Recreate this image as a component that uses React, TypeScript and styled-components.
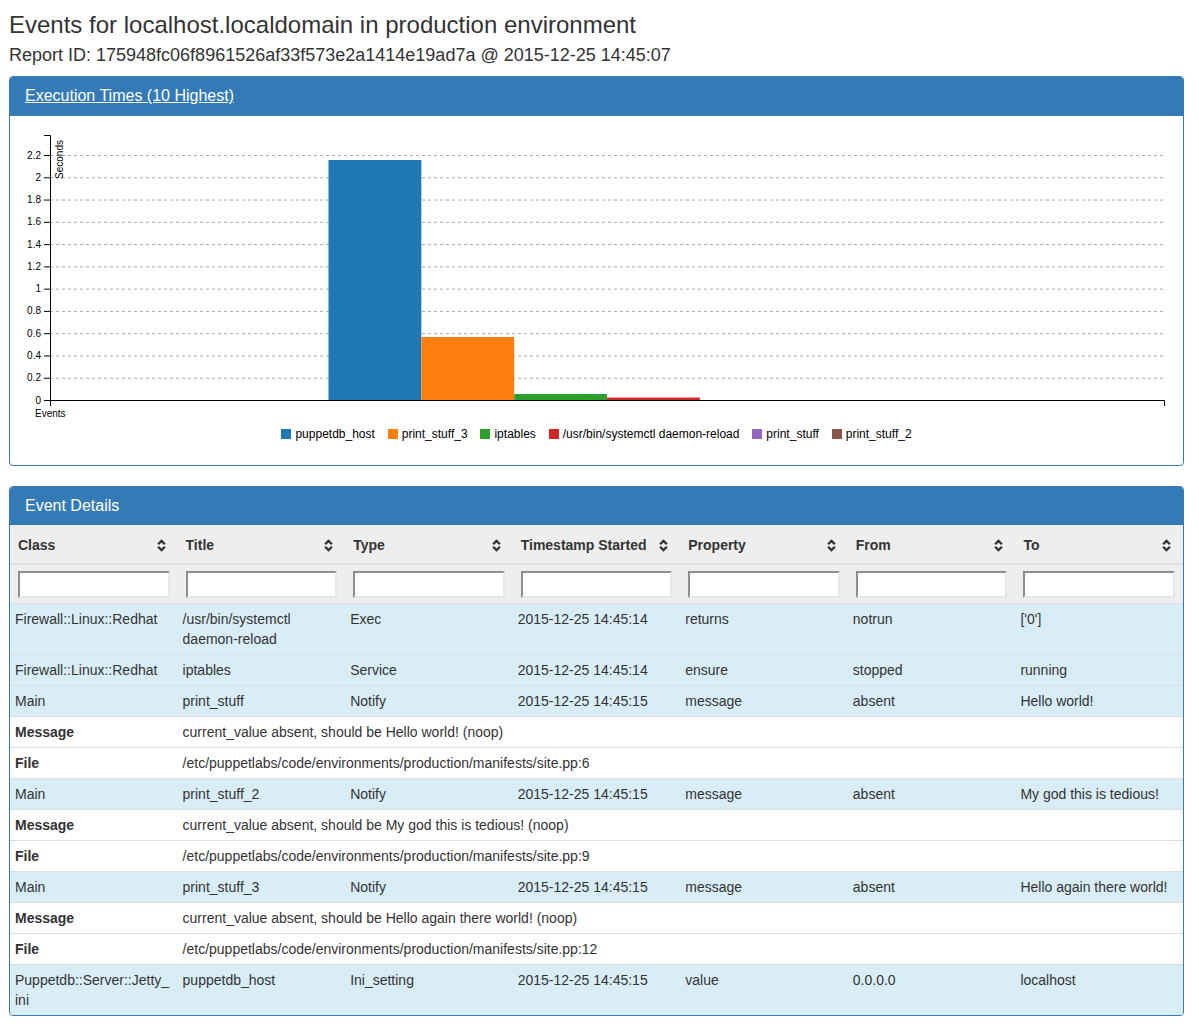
import React from 'react';
import styled, { createGlobalStyle } from 'styled-components';

const GlobalStyle = createGlobalStyle`
  html, body { margin: 0; padding: 0; background: #fff; }
  body {
    font-family: "Liberation Sans", Arial, Helvetica, sans-serif;
    font-size: 14px;
    line-height: 1.42857143;
    color: #333;
  }
  * { box-sizing: border-box; }
`;

const Page = styled.div`
  padding: 0 15px 1px 9px;
`;

const Title = styled.h3`
  font-size: 24px;
  font-weight: 400;
  line-height: 1.1;
  margin: 12px 0 0;
  color: #333;
`;

const Subtitle = styled.h4`
  font-size: 18px;
  font-weight: 400;
  line-height: 1.1;
  margin: 8px 0 10px;
  color: #333;
`;

const Panel = styled.section`
  border: 1px solid #337ab7;
  border-radius: 4px;
  background: #fff;
  margin-bottom: 20px;
  overflow: hidden;
`;

const PanelHeading = styled.div`
  background: #337ab7;
  color: #fff;
  padding: 10px 15px;
  border-bottom: 1px solid #337ab7;
`;

const PanelTitle = styled.h3<{ $link?: boolean }>`
  margin: 0;
  font-size: 16px;
  font-weight: 400;
  line-height: 1.1;
  color: #fff;
  text-decoration: ${(p) => (p.$link ? 'underline' : 'none')};
`;

const ChartBody = styled.div`
  display: flex;
  flex-direction: column;
  height: 349px;
`;

const ChartSvg = styled.svg`
  display: block;
  font-family: "Liberation Sans", Arial, sans-serif;
  font-size: 10px;
`;

const Legend = styled.div`
  display: flex;
  justify-content: center;
  gap: 12.9px;
  font-size: 12px;
  line-height: 16px;
  color: #000;
`;

const LegendItem = styled.div`
  display: flex;
  align-items: center;
  white-space: nowrap;
`;

const Swatch = styled.span<{ $color: string }>`
  display: inline-block;
  width: 10px;
  height: 10px;
  margin-right: 4px;
  background: ${(p) => p.$color};
`;

const Table = styled.table`
  width: 100%;
  table-layout: fixed;
  border-collapse: collapse;
  border-spacing: 0;
`;

const HeadCell = styled.th`
  background: #eeeeee;
  padding: 10px 12px 8px 8px;
  text-align: left;
  font-weight: 700;
  line-height: 20px;
  border-bottom: 2px solid #dddddd;
`;

const HeadInner = styled.div`
  display: flex;
  align-items: center;
  justify-content: space-between;
  white-space: nowrap;
`;

const FilterCell = styled.td`
  background: #eeeeee;
  padding: 6px 8px 5px;
  border-bottom: 1px solid #dddddd;
`;

const FilterInput = styled.input`
  display: block;
  width: 100%;
  height: 27px;
  margin: 0;
  padding: 1px 2px;
  background: #fff;
  border-style: solid;
  border-width: 2px;
  border-color: #8e8e8e #e6e6e6 #e6e6e6 #8e8e8e;
  font: inherit;
`;

const Row = styled.tr<{ $info?: boolean }>`
  background: ${(p) => (p.$info ? '#d9edf7' : '#fff')};
`;

const Cell = styled.td<{ $bold?: boolean }>`
  padding: 5px;
  vertical-align: top;
  line-height: 20px;
  border-top: 1px solid #dddddd;
  font-weight: ${(p) => (p.$bold ? 700 : 400)};
  word-wrap: break-word;
  overflow-wrap: break-word;
`;

const SortIcon = () => (
  <svg width="9" height="13" viewBox="0 0 9 13" aria-hidden="true">
    <path d="M1.1 5.3 L4.5 1.9 L7.9 5.3" fill="none" stroke="#333" strokeWidth="2.3" />
    <path d="M1.1 7.7 L4.5 11.1 L7.9 7.7" fill="none" stroke="#333" strokeWidth="2.3" />
  </svg>
);

const X0 = 40;
const X1 = 1154;
const Y0 = 284;
const YTOP = 19;
const PX_PER_UNIT = 111.36;
const yOf = (v: number) => Y0 - v * PX_PER_UNIT;
const CAT_W = (X1 - X0) / 12;

const series = [
  { name: 'puppetdb_host', color: '#1f77b4', value: 2.155 },
  { name: 'print_stuff_3', color: '#ff7f0e', value: 0.566 },
  { name: 'iptables', color: '#2ca02c', value: 0.054 },
  { name: '/usr/bin/systemctl daemon-reload', color: '#d62728', value: 0.022 },
  { name: 'print_stuff', color: '#9467bd', value: 0 },
  { name: 'print_stuff_2', color: '#8c564b', value: 0 },
];

const ticks = [0, 0.2, 0.4, 0.6, 0.8, 1, 1.2, 1.4, 1.6, 1.8, 2, 2.2];

const Chart = () => (
  <ChartBody>
    <ChartSvg width={1173} height={310} viewBox="0 0 1173 310">
      {ticks.slice(1).map((t) => (
        <line
          key={'g' + t}
          x1={X0}
          x2={X1}
          y1={yOf(t) + 0.5}
          y2={yOf(t) + 0.5}
          stroke="#aaaaaa"
          strokeDasharray="3 3"
        />
      ))}
      {series.map((s, i) =>
        s.value > 0 ? (
          <rect
            key={s.name}
            x={X0 + (3 + i) * CAT_W}
            y={yOf(s.value)}
            width={CAT_W}
            height={s.value * PX_PER_UNIT}
            fill={s.color}
          />
        ) : null
      )}
      <path
        d={`M${X0 - 6},${YTOP + 0.5} H${X0 + 0.5} V${Y0 + 0.5} H${X0 - 6}`}
        fill="none"
        stroke="#000"
      />
      {ticks.map((t) => (
        <g key={'t' + t}>
          <line x1={X0 - 6} x2={X0} y1={yOf(t) + 0.5} y2={yOf(t) + 0.5} stroke="#000" />
          <text x={X0 - 9} y={yOf(t) + 3.5} textAnchor="end" fill="#000">
            {String(t)}
          </text>
        </g>
      ))}
      <path
        d={`M${X0 + 0.5},${Y0 + 6} V${Y0 + 0.5} H${X1 + 0.5} V${Y0 + 6}`}
        fill="none"
        stroke="#000"
      />
      <text transform="rotate(-90)" x={-24} y={53} textAnchor="end" fill="#000">
        Seconds
      </text>
      <text x={25} y={301} fill="#000">
        Events
      </text>
    </ChartSvg>
    <Legend>
      {series.map((s) => (
        <LegendItem key={s.name}>
          <Swatch $color={s.color} />
          {s.name}
        </LegendItem>
      ))}
    </Legend>
  </ChartBody>
);

type EventRow = {
  kind: 'event';
  cells: string[];
};
type DetailRow = {
  kind: 'detail';
  label: string;
  value: string;
};

const rows: (EventRow | DetailRow)[] = [
  {
    kind: 'event',
    cells: ['Firewall::Linux::Redhat', '/usr/bin/systemctl daemon-reload', 'Exec', '2015-12-25 14:45:14', 'returns', 'notrun', "['0']"],
  },
  {
    kind: 'event',
    cells: ['Firewall::Linux::Redhat', 'iptables', 'Service', '2015-12-25 14:45:14', 'ensure', 'stopped', 'running'],
  },
  {
    kind: 'event',
    cells: ['Main', 'print_stuff', 'Notify', '2015-12-25 14:45:15', 'message', 'absent', 'Hello world!'],
  },
  { kind: 'detail', label: 'Message', value: 'current_value absent, should be Hello world! (noop)' },
  { kind: 'detail', label: 'File', value: '/etc/puppetlabs/code/environments/production/manifests/site.pp:6' },
  {
    kind: 'event',
    cells: ['Main', 'print_stuff_2', 'Notify', '2015-12-25 14:45:15', 'message', 'absent', 'My god this is tedious!'],
  },
  { kind: 'detail', label: 'Message', value: 'current_value absent, should be My god this is tedious! (noop)' },
  { kind: 'detail', label: 'File', value: '/etc/puppetlabs/code/environments/production/manifests/site.pp:9' },
  {
    kind: 'event',
    cells: ['Main', 'print_stuff_3', 'Notify', '2015-12-25 14:45:15', 'message', 'absent', 'Hello again there world!'],
  },
  { kind: 'detail', label: 'Message', value: 'current_value absent, should be Hello again there world! (noop)' },
  { kind: 'detail', label: 'File', value: '/etc/puppetlabs/code/environments/production/manifests/site.pp:12' },
  {
    kind: 'event',
    cells: ['Puppetdb::Server::Jetty_\u200Bini', 'puppetdb_host', 'Ini_setting', '2015-12-25 14:45:15', 'value', '0.0.0.0', 'localhost'],
  },
];

const columns = ['Class', 'Title', 'Type', 'Timestamp Started', 'Property', 'From', 'To'];

const EventTable = () => (
  <Table>
    <thead>
      <tr>
        {columns.map((c) => (
          <HeadCell key={c}>
            <HeadInner>
              <span>{c}</span>
              <SortIcon />
            </HeadInner>
          </HeadCell>
        ))}
      </tr>
      <tr>
        {columns.map((c) => (
          <FilterCell key={'f' + c}>
            <FilterInput type="text" aria-label={'Filter ' + c} />
          </FilterCell>
        ))}
      </tr>
    </thead>
    <tbody>
      {rows.map((r, i) =>
        r.kind === 'event' ? (
          <Row key={i} $info>
            {r.cells.map((c, j) => (
              <Cell key={j}>{c}</Cell>
            ))}
          </Row>
        ) : (
          <Row key={i}>
            <Cell $bold>{r.label}</Cell>
            <Cell colSpan={6}>{r.value}</Cell>
          </Row>
        )
      )}
    </tbody>
  </Table>
);

export default function App() {
  return (
    <Page>
      <GlobalStyle />
      <Title>Events for localhost.localdomain in production environment</Title>
      <Subtitle>Report ID: 175948fc06f8961526af33f573e2a1414e19ad7a @ 2015-12-25 14:45:07</Subtitle>
      <Panel>
        <PanelHeading>
          <PanelTitle $link>Execution Times (10 Highest)</PanelTitle>
        </PanelHeading>
        <Chart />
      </Panel>
      <Panel>
        <PanelHeading>
          <PanelTitle>Event Details</PanelTitle>
        </PanelHeading>
        <EventTable />
      </Panel>
    </Page>
  );
}
